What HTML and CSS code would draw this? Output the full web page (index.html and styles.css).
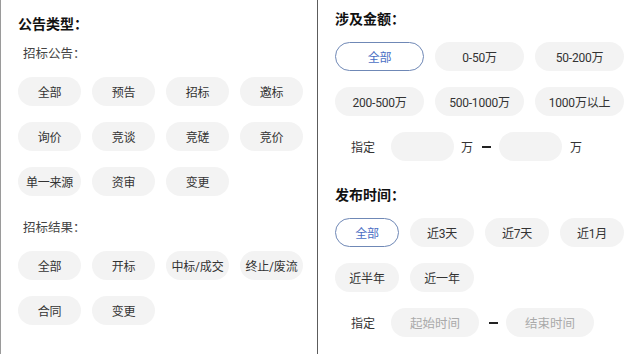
FILE: index.html
```html
<!DOCTYPE html>
<html lang="zh">
<head>
<meta charset="utf-8">
<link rel="stylesheet" href="styles.css">
</head>
<body>
<div class="page">
  <section class="panel left">
    <h2 class="title t-left">公告类型：</h2>
    <div class="sub">招标公告：</div>
    <div class="grid g4">
      <div class="chip">全部</div>
      <div class="chip">预告</div>
      <div class="chip">招标</div>
      <div class="chip">邀标</div>
      <div class="chip">询价</div>
      <div class="chip">竞谈</div>
      <div class="chip">竞磋</div>
      <div class="chip">竞价</div>
      <div class="chip">单一来源</div>
      <div class="chip">资审</div>
      <div class="chip">变更</div>
    </div>
    <div class="sub sub2">招标结果：</div>
    <div class="grid g4">
      <div class="chip">全部</div>
      <div class="chip">开标</div>
      <div class="chip">中标/成交</div>
      <div class="chip">终止/废流</div>
      <div class="chip">合同</div>
      <div class="chip">变更</div>
    </div>
  </section>
  <section class="panel right">
    <h2 class="title t-right">涉及金额：</h2>
    <div class="grid g3">
      <div class="chip active">全部</div>
      <div class="chip">0-50万</div>
      <div class="chip">50-200万</div>
      <div class="chip">200-500万</div>
      <div class="chip">500-1000万</div>
      <div class="chip">1000万以上</div>
    </div>
    <div class="custom">
      <span class="lbl">指定</span>
      <div class="input amt"></div>
      <span class="unit">万</span>
      <span class="dash"></span>
      <div class="input amt"></div>
      <span class="unit">万</span>
    </div>
    <h2 class="title t-right2">发布时间：</h2>
    <div class="grid g4r">
      <div class="chip active">全部</div>
      <div class="chip">近3天</div>
      <div class="chip">近7天</div>
      <div class="chip">近1月</div>
      <div class="chip">近半年</div>
      <div class="chip">近一年</div>
    </div>
    <div class="custom">
      <span class="lbl">指定</span>
      <div class="input date">起始时间</div>
      <span class="dash dash2"></span>
      <div class="input date">结束时间</div>
    </div>
  </section>
</div>
</body>
</html>
```
FILE: styles.css
```css
* { box-sizing: border-box; }
html, body { margin: 0; padding: 0; background: #fff; }
body {
  font-family: Roboto, "Noto Sans CJK SC", sans-serif;
  color: #333;
  width: 640px;
  height: 354px;
  overflow: hidden;
}
.page {
  display: flex;
  height: 354px;
}
.panel { height: 100%; }
.left {
  width: 319px;
  border-left: 1px solid #9a9a9a;
  border-right: 1.5px solid #5c5c5c;
  padding-left: 17px;
  padding-right: 14px;
}
.right {
  flex: 1;
  padding-left: 17px;
  padding-right: 16px;
}
.title {
  margin: 0;
  font-size: 14px;
  line-height: 20px;
  font-weight: 700;
  color: #111;
}
.t-left { margin-top: 14px; }
.t-right { margin-top: 9px; }
.t-right2 { margin-top: 24px; }
.sub {
  margin-top: 10px;
  padding-left: 5px;
  font-size: 12.5px;
  line-height: 20px;
  color: #444;
}
.sub2 { margin-top: 22px; }
.grid {
  display: grid;
  gap: 16px 11px;
  margin-top: 13px;
}
.g4 { grid-template-columns: repeat(4, 63px); }
.g3 { grid-template-columns: repeat(3, 89px); }
.g4r { grid-template-columns: repeat(4, 64px); }
.chip {
  height: 29px;
  border-radius: 15px;
  background: #f3f3f3;
  display: flex;
  align-items: center;
  justify-content: center;
  font-size: 12px;
  color: #333;
  white-space: nowrap;
  letter-spacing: -0.2px;
}
.chip.active {
  background: #fff;
  border: 1px solid #6f88b6;
  color: #4b6fc4;
}
.custom {
  display: flex;
  align-items: center;
  margin-top: 16px;
  height: 29px;
  padding-left: 16px;
  font-size: 12px;
  color: #333;
}
.lbl { width: 24px; margin-right: 16px; }
.input {
  height: 29px;
  border-radius: 15px;
  background: #f3f3f3;
  display: flex;
  align-items: center;
  justify-content: center;
  font-size: 12.5px;
  color: #aaa;
}
.amt { width: 63px; }
.date { width: 88px; }
.unit { margin-left: 7px; margin-right: 9px; }
.unit:last-child { margin-left: 8px; }
.dash {
  width: 9px;
  height: 2px;
  background: #222;
  margin-right: 8px;
}
.dash2 { margin-left: 10px; }
```
